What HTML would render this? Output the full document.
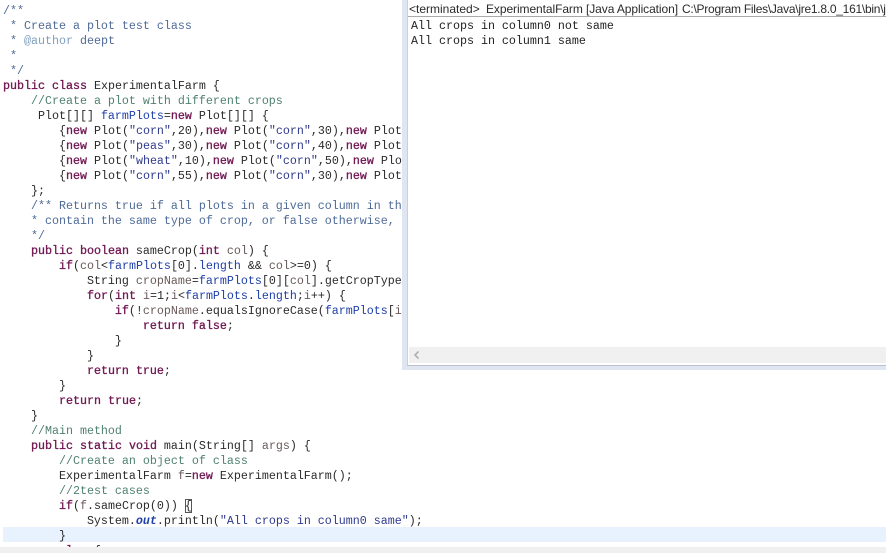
<!DOCTYPE html>
<html><head><meta charset="utf-8"><style>
html,body{margin:0;padding:0;background:#fff;width:886px;height:553px;overflow:hidden}
#root{position:relative;width:886px;height:553px;overflow:hidden;background:#fff}
#ed{position:absolute;left:3px;top:4px;width:883px;height:543px;overflow:hidden;font:11.67px/15px "Liberation Mono",monospace;color:#2a2a2a;white-space:pre}
.hl{position:absolute;left:3px;top:527px;width:883px;height:15px;background:#e8f2fe}
.k{color:#6f1550;-webkit-text-stroke:.3px #6f1550}.c{color:#4f8070}.d{color:#4f6b98}.t{color:#7f9fbf}.s{color:#2f3a8c}.f{color:#1f3fa8}.l{color:#6a5a5a}
#con{position:absolute;left:402px;top:0;width:484px;height:370px;background:#dfe6f1}
#cin{position:absolute;left:5px;top:0;width:479px;height:366px;background:#fff;border-left:1px solid #c9cfdb;border-bottom:1px solid #b9c0cf;box-sizing:border-box}
#head{position:absolute;left:0;top:1px;width:484px;height:16px;font:12px/16px "Liberation Sans",sans-serif;color:#2a2a2a;white-space:pre;overflow:hidden;z-index:3}
#head span{position:absolute;top:0}
#rule{position:absolute;left:6px;top:16px;width:478px;height:1px;background:#a9a9a9}
#out{position:absolute;left:9px;top:19px;font:11.67px/15px "Liberation Mono",monospace;color:#222;white-space:pre}
#sb{position:absolute;left:7px;top:347px;width:477px;height:16px;background:#f0f0f0}
#foot{position:absolute;left:0;top:547px;width:886px;height:6px;background:#f0f0f0}
</style></head><body><div id="root">
<div class="hl"></div>
<div id="ed"><span class="d">/**
 * Create a plot test class
 * <span class="t">@author</span> deept
 *
 */</span>
<span class="k">public</span> <span class="k">class</span> ExperimentalFarm {
    <span class="c">//Create a plot with different crops</span>
     Plot[][] <span class="f">farmPlots</span>=<span class="k">new</span> Plot[][] {
        {<span class="k">new</span> Plot(<span class="s">"corn"</span>,20),<span class="k">new</span> Plot(<span class="s">"corn"</span>,30),<span class="k">new</span> Plot(<span class="s">"peas"</span>,10)},
        {<span class="k">new</span> Plot(<span class="s">"peas"</span>,30),<span class="k">new</span> Plot(<span class="s">"corn"</span>,40),<span class="k">new</span> Plot(<span class="s">"corn"</span>,10)},
        {<span class="k">new</span> Plot(<span class="s">"wheat"</span>,10),<span class="k">new</span> Plot(<span class="s">"corn"</span>,50),<span class="k">new</span> Plot(<span class="s">"rice"</span>,10)},
        {<span class="k">new</span> Plot(<span class="s">"corn"</span>,55),<span class="k">new</span> Plot(<span class="s">"corn"</span>,30),<span class="k">new</span> Plot(<span class="s">"peas"</span>,10)}
    };
    <span class="d">/** Returns true if all plots in a given column in the farm
    * contain the same type of crop, or false otherwise,
    */</span>
    <span class="k">public</span> <span class="k">boolean</span> sameCrop(<span class="k">int</span> <span class="l">col</span>) {
        <span class="k">if</span>(<span class="l">col</span>&lt;<span class="f">farmPlots</span>[0].<span class="f">length</span> &amp;&amp; <span class="l">col</span>&gt;=0) {
            String <span class="l">cropName</span>=<span class="f">farmPlots</span>[0][<span class="l">col</span>].getCropType();
            <span class="k">for</span>(<span class="k">int</span> <span class="l">i</span>=1;<span class="l">i</span>&lt;<span class="f">farmPlots</span>.<span class="f">length</span>;<span class="l">i</span>++) {
                <span class="k">if</span>(!<span class="l">cropName</span>.equalsIgnoreCase(<span class="f">farmPlots</span>[<span class="l">i</span>][<span class="l">col</span>]
                    <span class="k">return</span> <span class="k">false</span>;
                }
            }
            <span class="k">return</span> <span class="k">true</span>;
        }
        <span class="k">return</span> <span class="k">true</span>;
    }
    <span class="c">//Main method</span>
    <span class="k">public</span> <span class="k">static</span> <span class="k">void</span> main(String[] <span class="l">args</span>) {
        <span class="c">//Create an object of class</span>
        ExperimentalFarm <span class="l">f</span>=<span class="k">new</span> ExperimentalFarm();
        <span class="c">//2test cases</span>
        <span class="k">if</span>(<span class="l">f</span>.sameCrop(0)) <span style="outline:1px solid #555;outline-offset:-1px">{</span>
            System.<span class="f"><b><i>out</i></b></span>.println(<span class="s">"All crops in column0 same"</span>);
        }
        <span class="k">else</span> {</div>
<div id="con"><div id="cin"></div>
<div id="head"><span style="left:7px">&lt;terminated&gt;</span><span style="left:84px;letter-spacing:-.08px">ExperimentalFarm [Java Application]</span><span style="left:280px;letter-spacing:-.26px">C:\Program Files\Java\jre1.8.0_161\bin\javaw.exe</span></div>
<div id="rule"></div>
<div id="out">All crops in column0 not same
All crops in column1 same</div>
<div id="sb"><svg width="12" height="16" style="position:absolute;left:3px;top:0"><path d="M6.5 4.5 L3 8 L6.5 11.5" fill="none" stroke="#b0b0b0" stroke-width="1.6"/></svg></div>
</div>
<div id="foot"></div>
</div></body></html>
